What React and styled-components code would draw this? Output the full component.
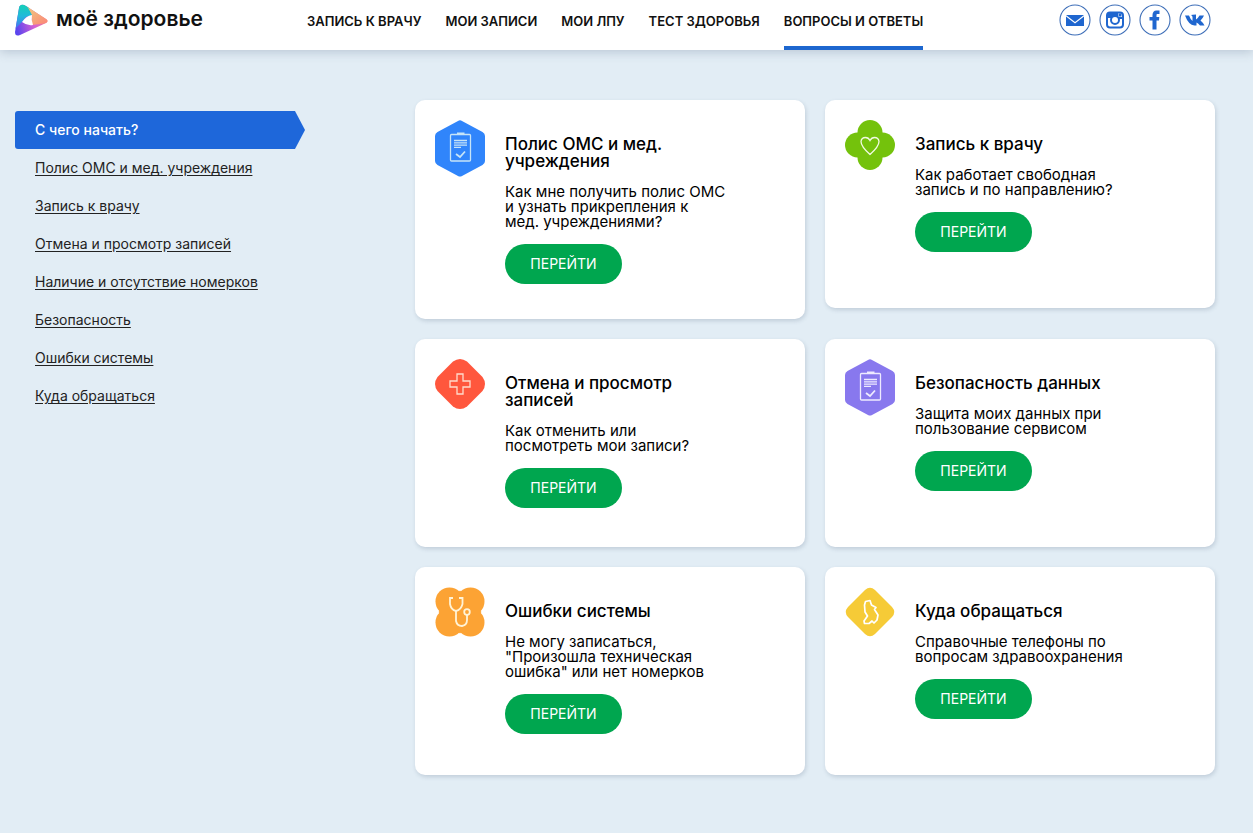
import React from 'react'
import styled, { createGlobalStyle } from 'styled-components'

const GlobalStyle = createGlobalStyle`
  * {
    box-sizing: border-box;
  }

  body {
    margin: 0;
    min-height: 100vh;
    background-color: #e2edf5;
    color: #111111;
    font-family: Inter, 'Open Sans', sans-serif;
  }
`

const Header = styled.header`
  position: relative;
  display: flex;
  align-items: stretch;
  height: 50px;
  padding: 0 42px 0 14px;
  background-color: #ffffff;
  box-shadow: 0 2px 10px rgba(60, 80, 110, 0.25);
`

const Logo = styled.a`
  display: flex;
  align-items: flex-start;
  gap: 8px;
  width: 293px;
  padding-top: 4px;
  color: #111111;
  font-size: 21px;
  font-weight: 600;
  line-height: 30px;
  text-decoration: none;
  white-space: nowrap;
`

const Nav = styled.nav`
  display: flex;
  gap: 24px;
`

const NavLink = styled.a`
  padding-top: 12px;
  border-bottom: 4px solid ${props => (props.$active ? '#1d67cf' : 'transparent')};
  color: #111111;
  font-size: 13px;
  font-weight: 600;
  line-height: 18px;
  text-decoration: none;
  white-space: nowrap;
`

const Socials = styled.div`
  display: flex;
  gap: 8px;
  margin-left: auto;
  padding-top: 4px;
`

const SocialLink = styled.a`
  display: block;
  width: 32px;
  height: 32px;
`

const Page = styled.main`
  display: grid;
  grid-template-columns: 290px 1fr;
  column-gap: 110px;
  padding: 50px 38px 50px 15px;
`

const Menu = styled.nav`
  display: flex;
  flex-direction: column;
  padding-top: 11px;
`

const MenuLink = styled.a`
  padding: 0 20px;
  color: ${props => (props.$active ? '#ffffff' : '#222222')};
  background-color: ${props => (props.$active ? '#1e67da' : 'transparent')};
  border-radius: 3px;
  clip-path: ${props =>
    props.$active
      ? 'polygon(0 0, 280px 0, 100% 50%, 280px 100%, 0 100%)'
      : 'none'};
  font-size: 14px;
  font-weight: ${props => (props.$active ? 500 : 400)};
  line-height: 38px;
  text-decoration: ${props => (props.$active ? 'none' : 'underline')};
  text-underline-offset: 2px;
`

const Cards = styled.div`
  display: grid;
  grid-template-columns: 1fr 1fr;
  align-items: start;
  gap: 20px;
`

const Card = styled.article`
  display: flex;
  gap: 20px;
  min-height: 208px;
  padding: 20px 20px 35px;
  background-color: #ffffff;
  border-radius: 10px;
  box-shadow: 1px 2px 4px rgba(60, 80, 110, 0.2);
`

const CardIcon = styled.svg`
  flex: none;
  width: 50px;
  height: ${props => props.$height || 50}px;
`

const CardBody = styled.div`
  padding-top: 16px;
`

const CardTitle = styled.h2`
  margin: 0 0 14px;
  color: #000000;
  font-size: 17px;
  font-weight: 500;
  line-height: 17px;
  white-space: pre-line;
`

const CardText = styled.p`
  margin: 0 0 15px;
  color: #000000;
  font-size: 15px;
  line-height: 15px;
  white-space: pre-line;
`

const GoButton = styled.button`
  width: 117px;
  height: 40px;
  padding: 0 0 2px;
  border: 0;
  border-radius: 20px;
  background-color: #00a64f;
  color: #ffffff;
  font-family: inherit;
  font-size: 14px;
  cursor: pointer;
`

const LogoIcon = () => (
  <svg width="34" height="34" viewBox="0 0 34 34" aria-hidden="true">
    <defs>
      <linearGradient id="teal" x1="0" y1="0" x2="0" y2="1">
        <stop offset="0" stopColor="#14d2b4" />
        <stop offset="0.5" stopColor="#22b8dc" />
        <stop offset="1" stopColor="#4a6cf0" />
      </linearGradient>
      <linearGradient id="peach" x1="0" y1="0" x2="0.8" y2="1">
        <stop offset="0" stopColor="#ecd380" />
        <stop offset="1" stopColor="#fb8a78" />
      </linearGradient>
      <linearGradient id="violet" x1="0" y1="0.5" x2="1" y2="0.2">
        <stop offset="0" stopColor="#5a45ee" />
        <stop offset="0.5" stopColor="#d35fd6" />
        <stop offset="1" stopColor="#ff8a70" />
      </linearGradient>
      <clipPath id="play">
        <path d="M7 1Q9 0 12 2L32 15Q35 17 32 19L6 31Q1 33 1 28L5 4Q5 2 7 1Z" />
      </clipPath>
    </defs>
    <g clipPath="url(#play)">
      <path d="M0 0H34V34H0Z" fill="url(#violet)" />
      <path d="M0 0H14L19 11L12 13L8 18L1 25Z" fill="url(#teal)" />
      <path d="M12 0L34 12V19L18 21L18 11Z" fill="url(#peach)" />
    </g>
    <path d="M8 18Q12 12 18 11Q17 16 19 21Q13 22 8 18Z" fill="#ffffff" />
  </svg>
)

const socials = [
  {
    label: 'Почта',
    icon: (
      <>
        <path d="M7 11H25L16 18Z" fill="#1f66cf" />
        <path d="M7 12.5L16 19.5L25 12.5V22H7Z" fill="#1f66cf" />
      </>
    ),
  },
  {
    label: 'Instagram',
    icon: (
      <>
        <rect x="8" y="8.5" width="16" height="15" rx="3" fill="none" stroke="#1f66cf" strokeWidth="2" />
        <path d="M8 9H19V14H8ZM18 13H24V15H18Z" fill="#1f66cf" />
        <rect x="19.5" y="9.5" width="3" height="3" fill="#1f66cf" />
        <circle cx="16" cy="16" r="4" fill="#ffffff" stroke="#1f66cf" strokeWidth="2" />
      </>
    ),
  },
  {
    label: 'Facebook',
    icon: (
      <path
        d="M13.5 25.5V16.5H10.5V13H13.5V11C13.5 8.3 15 6.5 17.4 6.5H20.5V10H18.6C17.7 10 17.5 10.5 17.5 11.3V13H20.3L20 16.5H17.5V25.5Z"
        fill="#1f66cf"
      />
    ),
  },
  {
    label: 'ВКонтакте',
    icon: (
      <path
        d="M6 11.5H10Q11.5 15.500 13.500 17V13Q13.500 12 12 11Q13 10.500 17 10.500V15.500Q19.500 13.500 20.500 11.500H25Q24 14 21.500 16.500Q24 18.500 25.500 21.500H21Q19.500 19.500 17.500 18.500V21.500H15.500Q9.500 21 6 11.500Z"
        fill="#1f66cf"
      />
    ),
  },
]

const Clipboard = ({ color, line }) => (
  <CardIcon $height={57} viewBox="0 0 50 57" aria-hidden="true">
    <path
      d="M23 1Q25 -0.5 27 1L47.5 12Q50 13.5 50 16V41Q50 43.5 47.5 45L27 56Q25 57.2 23 56L2.5 45Q0 43.5 0 41V16Q0 13.5 2.5 12Z"
      fill={color}
    />
    <g fill="none" stroke={line} strokeWidth="1.3">
      <rect x="15.5" y="14.5" width="20" height="26.5" rx="1" />
      <path d="M22 13.5H29.5" strokeWidth="2" />
      <path d="M19 20.5H32M19 22.8H32M19 25.1H32M19 27.4H26" />
      <path d="M21 34L25 37L30 31.5" strokeWidth="1.8" />
    </g>
  </CardIcon>
)

const HeartIcon = () => (
  <CardIcon viewBox="0 0 50 50" aria-hidden="true">
    <g fill="#74c20c">
      <circle cx="25" cy="12.5" r="12.5" />
      <circle cx="25" cy="37.5" r="12.5" />
      <circle cx="12.5" cy="25" r="12.5" />
      <circle cx="37.5" cy="25" r="12.5" />
    </g>
    <path
      d="M25 34.5Q16 26.5 16 21.5Q16.5 17.5 20.5 17.5Q23.5 17.5 25 20.5Q26.5 17.5 29.5 17.5Q33.5 17.5 34 21.5Q34 26.5 25 34.5Z"
      fill="none"
      stroke="#f1fae2"
      strokeWidth="1.3"
    />
  </CardIcon>
)

const CrossIcon = () => (
  <CardIcon viewBox="0 0 50 50" aria-hidden="true">
    <path
      d="M18 2.5Q25 -2.5 32 2.5L47.5 18Q52.5 25 47.5 32L32 47.5Q25 52.5 18 47.5L2.5 32Q-2.5 25 2.5 18Z"
      fill="#ff573d"
    />
    <path
      d="M22 15H28V22H35V28H28V35H22V28H15V22H22Z"
      fill="none"
      stroke="#ffdccb"
      strokeWidth="1.3"
    />
  </CardIcon>
)

const StethoscopeIcon = () => (
  <CardIcon viewBox="0 0 50 50" aria-hidden="true">
    <g fill="#fca334">
      <circle cx="14.5" cy="14.5" r="14" />
      <circle cx="35.5" cy="14.5" r="14" />
      <circle cx="14.5" cy="35.5" r="14" />
      <circle cx="35.5" cy="35.5" r="14" />
      <path d="M25 3.5L46.5 25L25 46.5L3.5 25Z" />
    </g>
    <g fill="none" stroke="#fff3d6" strokeWidth="1.8">
      <path d="M18 11H15V17Q16 23 21 24Q26 23 27.5 17V11H24" />
      <path d="M21 24V34Q22 39 27 39Q32 38 32 33V28" />
      <circle cx="32" cy="25" r="2.8" />
    </g>
  </CardIcon>
)

const RegionIcon = () => (
  <CardIcon viewBox="0 0 50 50" aria-hidden="true">
    <path
      d="M20 3Q25 -1.5 30 3L47 20Q51.5 25 47 30L30 47Q25 51.5 20 47L3 30Q-1.5 25 3 20Z"
      fill="#f6cb37"
    />
    <path
      d="M20.5 14.5L25 13.5L26.5 18L31 20.5L29.5 22.5L33 28L32 33L29 36L27 34L24 36.5H19.5L19 34L22.5 29L20 25L19.5 18Z"
      fill="none"
      stroke="#ffffff"
      strokeWidth="1.7"
      strokeLinejoin="round"
    />
  </CardIcon>
)

const navItems = [
  'ЗАПИСЬ К ВРАЧУ',
  'МОИ ЗАПИСИ',
  'МОИ ЛПУ',
  'ТЕСТ ЗДОРОВЬЯ',
  'ВОПРОСЫ И ОТВЕТЫ',
]

const menuItems = [
  'С чего начать?',
  'Полис ОМС и мед. учреждения',
  'Запись к врачу',
  'Отмена и просмотр записей',
  'Наличие и отсутствие номерков',
  'Безопасность',
  'Ошибки системы',
  'Куда обращаться',
]

const cards = [
  {
    icon: <Clipboard color="#3085fb" line="#c6e4f7" />,
    title: 'Полис ОМС и мед.\nучреждения',
    text: 'Как мне получить полис ОМС\nи узнать прикрепления к\nмед. учреждениями?',
  },
  {
    icon: <HeartIcon />,
    title: 'Запись к врачу',
    text: 'Как работает свободная\nзапись и по направлению?',
  },
  {
    icon: <CrossIcon />,
    title: 'Отмена и просмотр\nзаписей',
    text: 'Как отменить или\nпосмотреть мои записи?',
  },
  {
    icon: <Clipboard color="#8878ee" line="#eeeaff" />,
    title: 'Безопасность данных',
    text: 'Защита моих данных при\nпользование сервисом',
  },
  {
    icon: <StethoscopeIcon />,
    title: 'Ошибки системы',
    text: 'Не могу записаться,\n"Произошла техническая\nошибка" или нет номерков',
  },
  {
    icon: <RegionIcon />,
    title: 'Куда обращаться',
    text: 'Справочные телефоны по\nвопросам здравоохранения',
  },
]

const App = () => {
  return (
    <>
      <GlobalStyle />
      <Header>
        <Logo href="#">
          <LogoIcon />
          моё здоровье
        </Logo>
        <Nav>
          {navItems.map(item => (
            <NavLink key={item} href="#" $active={item === 'ВОПРОСЫ И ОТВЕТЫ'}>
              {item}
            </NavLink>
          ))}
        </Nav>
        <Socials>
          {socials.map(({ label, icon }) => (
            <SocialLink key={label} href="#" aria-label={label}>
              <svg width="32" height="32" viewBox="0 0 32 32">
                <circle cx="16" cy="16" r="15" fill="none" stroke="#3f6fb8" strokeWidth="1.1" />
                {icon}
              </svg>
            </SocialLink>
          ))}
        </Socials>
      </Header>
      <Page>
        <Menu>
          {menuItems.map((item, index) => (
            <MenuLink key={item} href="#" $active={index === 0}>
              {item}
            </MenuLink>
          ))}
        </Menu>
        <Cards>
          {cards.map(({ icon, title, text }) => (
            <Card key={title}>
              {icon}
              <CardBody>
                <CardTitle>{title}</CardTitle>
                <CardText>{text}</CardText>
                <GoButton type="button">ПЕРЕЙТИ</GoButton>
              </CardBody>
            </Card>
          ))}
        </Cards>
      </Page>
    </>
  )
}

export default App
